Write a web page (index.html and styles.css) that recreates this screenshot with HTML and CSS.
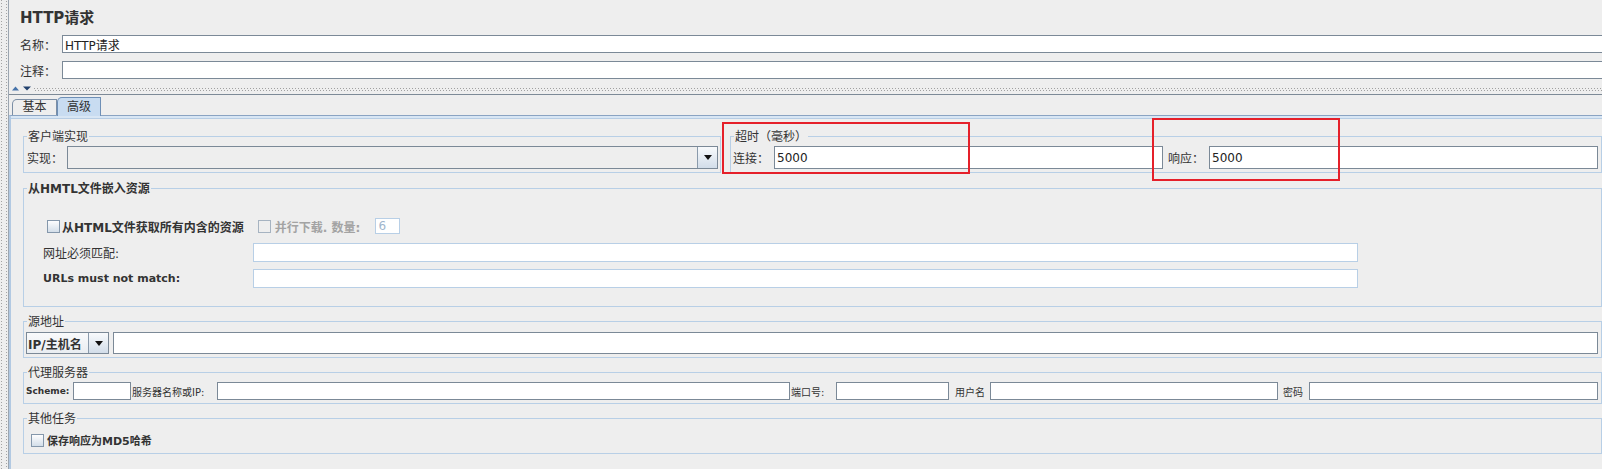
FILE: index.html
```html
<!DOCTYPE html>
<html lang="zh-CN">
<head>
<meta charset="utf-8">
<title>HTTP请求</title>
<link rel="stylesheet" href="styles.css">
</head>
<body>
<div class="window">
  <div class="vsplit"></div>
  <div class="main">
    <header class="header">
      <h1 class="title">HTTP请求</h1>
      <div class="hrow"><span class="hlabel">名称：</span><div class="field hfield">HTTP请求</div></div>
      <div class="hrow"><span class="hlabel">注释：</span><div class="field hfield"></div></div>
    </header>
    <div class="hsplit">
      <svg class="arrows" width="20" height="5" viewBox="0 0 20 5">
        <path d="M0 4.5 L3.5 0.5 L7 4.5 Z" fill="#4673aa"/>
        <path d="M11 0.5 L19 0.5 L15 4.5 Z" fill="#22416d"/>
      </svg>
      <div class="dots"></div>
    </div>
    <nav class="tabs">
      <div class="tab">基本</div>
      <div class="tab active">高级</div>
    </nav>
    <section class="content">
      <div class="strip"></div>
      <div class="groups">
        <div class="grow">
          <div class="group g-client">
            <div class="gtitle"><span>客户端实现</span></div>
            <div class="line l-client">
              <span class="lbl w40">实现：</span>
              <div class="combo combo-impl"><div class="combo-val"></div><div class="combo-btn"><i class="tri"></i></div></div>
            </div>
          </div>
          <div class="group g-timeout">
            <div class="gtitle"><span>超时（毫秒）</span></div>
            <div class="line l-timeout">
              <span class="lbl w41">连接：</span>
              <div class="field tfield">5000</div>
              <span class="lbl w41 gap5">响应：</span>
              <div class="field tfield">5000</div>
            </div>
          </div>
        </div>

        <div class="group g-html">
          <div class="gtitle"><span class="bold">从HMTL文件嵌入资源</span></div>
          <div class="cbrow">
            <i class="cb"></i><span class="cbtext bold">从HTML文件获取所有内含的资源</span>
            <i class="cb cb-dis"></i><span class="cbtext dis-text">并行下载. 数量:</span>
            <div class="field field-dis num">6</div>
          </div>
          <div class="frow frow-first">
            <span class="lbl w210">网址必须匹配:</span>
            <div class="field field-dis urlf"></div>
          </div>
          <div class="frow frow-second">
            <span class="lbl w210 bold small">URLs must not match:</span>
            <div class="field field-dis urlf"></div>
          </div>
        </div>

        <div class="group g-src">
          <div class="gtitle"><span>源地址</span></div>
          <div class="line l-src">
            <div class="combo combo-ip"><div class="combo-val bold">IP/主机名</div><div class="combo-btn"><i class="tri"></i></div></div>
            <div class="field srcfield"></div>
          </div>
        </div>

        <div class="group g-proxy">
          <div class="gtitle"><span>代理服务器</span></div>
          <div class="line l-proxy">
            <span class="plbl p-scheme bold">Scheme:</span>
            <div class="field pfield f-scheme"></div>
            <span class="plbl p-host">服务器名称或IP:</span>
            <div class="field pfield f-host"></div>
            <span class="plbl p-port">端口号:</span>
            <div class="field pfield f-port"></div>
            <span class="plbl p-user">用户名</span>
            <div class="field pfield f-user"></div>
            <span class="plbl p-pass">密码</span>
            <div class="field pfield f-pass"></div>
          </div>
        </div>

        <div class="group g-other">
          <div class="gtitle"><span>其他任务</span></div>
          <div class="cbrow cbrow-other">
            <i class="cb"></i><span class="cbtext md5">保存响应为MD5哈希</span>
          </div>
        </div>
      </div>
      <div class="mark mark-connect"></div>
      <div class="mark mark-response"></div>
    </section>
  </div>
</div>
</body>
</html>
```

FILE: styles.css
```css
* { box-sizing: border-box; }
html, body { margin: 0; padding: 0; }
body {
  width: 1602px;
  height: 469px;
  overflow: hidden;
  background: #eeeeee;
  font-family: "DejaVu Sans", "Noto Sans CJK SC", sans-serif;
  font-size: 12px;
  color: #333333;
}
.bold { font-weight: bold; }

.window { display: flex; height: 469px; }
.vsplit {
  width: 8px;
  flex: none;
  background-image:
    linear-gradient(#a3a3a3 1px, transparent 1px),
    linear-gradient(#a3a3a3 1px, transparent 1px);
  background-size: 1px 3px;
  background-repeat: repeat-y;
  background-position: 1px 0, 6px 1px;
}
.main {
  flex: 1;
  min-width: 0;
  display: flex;
  flex-direction: column;
  border-left: 1px solid #9ba5b0;
}

/* header */
.header { padding: 9px 0 0 11px; }
.title {
  margin: 0;
  font-size: 15px;
  line-height: 18px;
  font-weight: bold;
  color: #333333;
}
.hrow { display: flex; align-items: center; margin-top: 8px; height: 18px; }
.hlabel { width: 42px; flex: none; }
.field {
  background: #ffffff;
  border: 1px solid #7b8997;
  white-space: nowrap;
  overflow: hidden;
  padding: 0 2px;
  color: #222222;
  display: flex;
  align-items: center;
}
.hfield { flex: 1; height: 18px; margin-right: -4px; }

/* split bar */
.hsplit {
  display: flex;
  height: 16px;
  border-bottom: 1px solid #7d8a97;
}
.arrows { flex: none; margin: 7px 0 0 3px; display: block; }
.dots {
  flex: 1;
  height: 3px;
  margin: 9px 0 0 2px;
  background-image:
    linear-gradient(to right, #a0a0a0 1px, transparent 1px),
    linear-gradient(to right, #a0a0a0 1px, transparent 1px);
  background-size: 3px 1px;
  background-repeat: repeat-x;
  background-position: 0 0, 1px 2px;
}

/* tabs */
.tabs {
  display: flex;
  align-items: flex-end;
  height: 20px;
  padding-left: 3px;
}
.tab {
  width: 45px;
  height: 16px;
  border: 1px solid #7b8ea5;
  border-bottom: none;
  border-top-left-radius: 5px;
  text-align: center;
  line-height: 15px;
  background: #eeeeee;
  color: #333333;
}
.tab.active {
  width: 44px;
  height: 19px;
  margin-bottom: -1px;
  background: #c8dcf1;
  border-color: #6e8fb6;
  line-height: 18px;
  position: relative;
  z-index: 1;
}

/* content */
.content {
  flex: 1;
  position: relative;
  border-top: 1px solid #8aa3c2;
  border-left: 2px solid #b2c9e2;
}
.strip {
  height: 3px;
  background: #d8e6f4;
  border-bottom: 1px solid #b7cde4;
}
.groups { padding-left: 12px; }
.grow { display: flex; gap: 9px; margin-top: 17px; }
.group { border: 1px solid #b8cfe6; }
.g-client { width: 698px; flex: none; }
.g-timeout { flex: 1; }
.g-html { margin-top: 15px; padding-bottom: 18px; }
.g-src { margin-top: 14px; padding-bottom: 3px; }
.g-proxy { margin-top: 14px; padding-bottom: 3px; }
.g-other { margin-top: 14px; padding-bottom: 5px; }
.g-client, .g-timeout { padding-bottom: 3px; }

.gtitle {
  display: flex;
  margin: -7px 0 0 3px;
  height: 14px;
  line-height: 14px;
}
.gtitle span { background: #eeeeee; padding: 0 1px; }

.line { display: flex; align-items: center; }
.lbl { flex: none; white-space: nowrap; }
.w40 { width: 40px; }
.w41 { width: 41px; }
.w210 { width: 210px; }
.gap5 { margin-left: 5px; }
.small { font-size: 11px; }

.l-client { margin-top: 2px; padding: 0 2px 0 3px; }
.l-timeout { margin-top: 2px; padding: 0 3px 0 2px; }
.tfield { flex: 1; height: 23px; }

/* combo */
.combo {
  display: flex;
  border: 1px solid #7b8997;
}
.combo-val {
  flex: 1;
  background: #eeeeee;
  display: flex;
  align-items: center;
  padding-left: 1px;
  white-space: nowrap;
}
.combo-btn {
  width: 20px;
  flex: none;
  border-left: 1px solid #8a9aab;
  background: linear-gradient(#f8fafc, #d2dde9);
  display: flex;
  align-items: center;
  justify-content: center;
}
.tri {
  display: block;
  width: 0;
  height: 0;
  border-left: 4px solid transparent;
  border-right: 4px solid transparent;
  border-top: 5px solid #111111;
}
.combo-impl { flex: 1; height: 23px; }
.combo-ip { width: 83px; height: 22px; flex: none; }
.combo-ip .combo-val { background: linear-gradient(#f9fafb, #e9edf1); }

/* html group */
.cbrow {
  display: flex;
  align-items: center;
  height: 16px;
  margin-top: 22px;
  padding-left: 23px;
}
.cb {
  display: block;
  width: 13px;
  height: 13px;
  flex: none;
  border: 1px solid #8497ab;
  background: linear-gradient(#fdfdfe, #d3dee9);
}
.cb-dis {
  margin-left: 14px;
  border-color: #a6b3c1;
  background: #eeeeee;
}
.cbtext { margin-left: 2px; white-space: nowrap; }
.cb-dis + .cbtext { margin-left: 4px; }
.dis-text { color: #a3a3a3; font-weight: bold; }
.field-dis { border-color: #b8cfe6; }
.num {
  width: 25px;
  height: 16px;
  margin-left: 15px;
  color: #9fb6cd;
}
.frow {
  display: flex;
  align-items: center;
  padding-left: 19px;
}
.frow-first { margin-top: 9px; }
.frow-second { margin-top: 7px; }
.urlf { width: 1105px; height: 19px; }

/* source */
.l-src { margin-top: 3px; padding: 0 3px 0 2px; }
.srcfield { flex: 1; height: 22px; margin-left: 4px; }

/* proxy */
.l-proxy {
  margin-top: 2px;
  padding: 0 3px 0 2px;
  font-size: 10px;
}
.plbl { flex: none; white-space: nowrap; }
.pfield { height: 18px; flex: none; }
.p-scheme { width: 47px; font-size: 9px; }
.f-scheme { width: 58px; }
.p-host { width: 86px; padding-left: 1px; }
.f-host { width: 573px; }
.p-port { width: 46px; padding-left: 1px; }
.f-port { width: 113px; }
.p-user { width: 41px; padding-left: 6px; }
.f-user { width: 288px; }
.p-pass { width: 31px; padding-left: 5px; }
.f-pass { flex: 1; }

/* other */
.cbrow-other { margin-top: 6px; padding-left: 7px; }
.md5 { margin-left: 3px; font-size: 11px; font-weight: bold; }

/* red annotation frames */
.mark {
  position: absolute;
  border: 2px solid #e5202a;
  pointer-events: none;
}
.mark-connect { left: 711px; top: 6px; width: 248px; height: 52px; }
.mark-response { left: 1141px; top: 2px; width: 188px; height: 63px; }
```
